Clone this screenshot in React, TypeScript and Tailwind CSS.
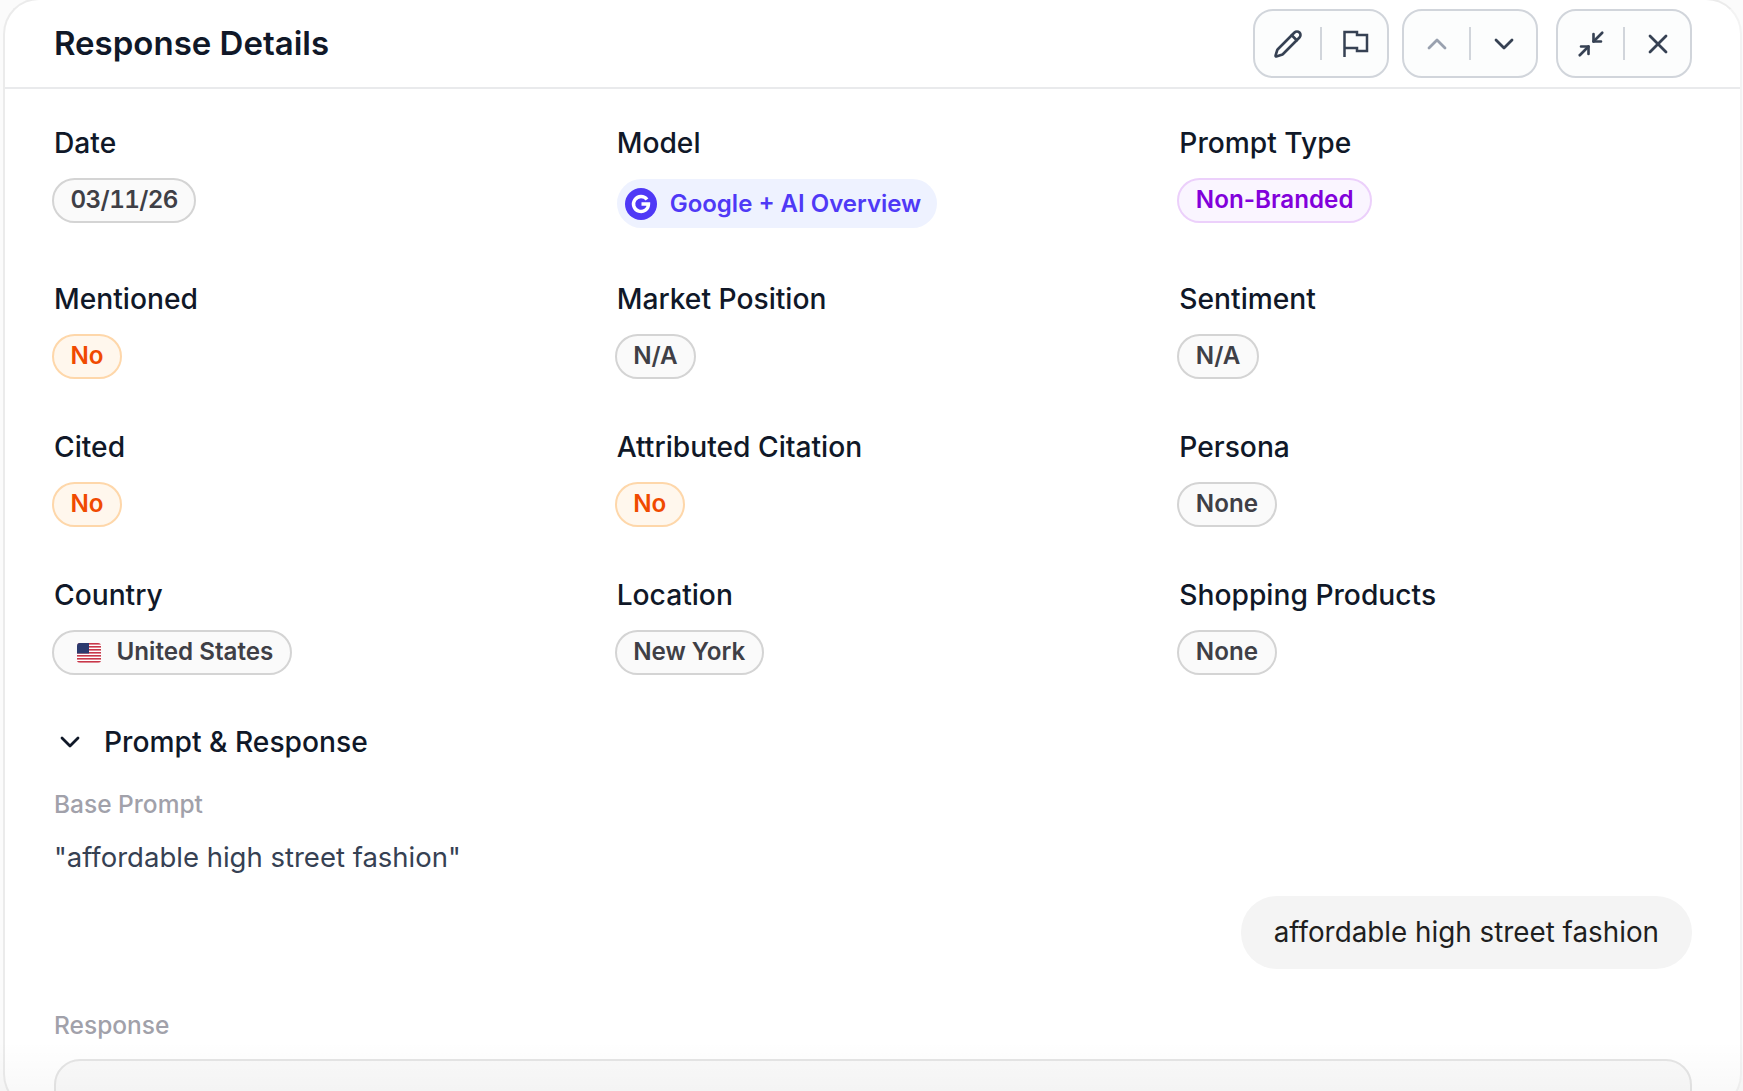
import React from 'react';
import { ChevronDown, ChevronUp, Minimize2, Pencil, X } from 'lucide-react';

const chipGray = 'border-[#d4d4d4] bg-[#fafafa] text-[#3f3f46]';
const chipOrange = 'border-[#fed7aa] bg-[#fff7ed] text-[#f04a00]';
const chipPurple = 'border-[#ecd0fb] bg-[#faf5ff] text-[#8200db]';

const Chip = ({ tone, children }: { tone: string; children: React.ReactNode }) => (
  <span className={`-ml-[2px] inline-flex h-[45px] items-center rounded-full border-2 px-[16.5px] text-[24.2px] font-semibold leading-none ${tone}`}>
    {children}
  </span>
);

const UsFlag = () => (
  <svg width="24" height="20" viewBox="0 0 24 20" className="shrink-0 rounded-[3px]">
    <rect width="24" height="20" fill="#fff" />
    {[0, 3, 6, 9, 12, 15, 18].map((y) => (
      <rect key={y} y={y} width="24" height="1.6" fill="#c8374a" />
    ))}
    <rect width="12" height="10.5" fill="#2b3a6e" />
  </svg>
);

const Flag = () => (
  <svg width="28" height="28" viewBox="0 0 28 28" fill="none" stroke="currentColor" strokeWidth="2.5">
    <path d="M3.5 27V2H16V5H26V21H16V18H3.5" />
  </svg>
);

const Field = ({ label, children }: { label: string; children: React.ReactNode }) => (
  <div>
    <div className="h-[36px] text-[28.2px] font-medium leading-[36px] text-[#101828]">{label}</div>
    <div className="mt-[17px]">{children}</div>
  </div>
);

const IconGroup = ({ left, right }: { left: React.ReactNode; right: React.ReactNode }) => (
  <div className="flex h-[69px] w-[136px] items-center rounded-[20px] border-2 border-[#d1d5db] bg-[#fcfdfd] text-[#364153]">
    <button className="flex flex-1 items-center justify-center">{left}</button>
    <div className="h-[33px] w-[2px] bg-[#d1d5db]" />
    <button className="flex flex-1 items-center justify-center">{right}</button>
  </div>
);

export default function App() {
  return (
    <div className="relative h-[1091px] overflow-hidden bg-[#fbfbfb] font-['Inter',sans-serif]">
      <div className="ml-[3px] mr-[1px] -mt-[2px] h-[1112px] rounded-[36px] border-2 border-[#ebebeb] border-r-[#f3f3f3] bg-white">
        <header className="flex h-[89px] items-center justify-between border-b-2 border-[#e9eaec] pl-[49px] pr-[48px]">
          <h1 className="text-[33px] font-semibold text-[#101828]">Response Details</h1>
          <div className="flex items-center gap-[13px]">
            <IconGroup left={<Pencil size={30} strokeWidth={2.1} />} right={<Flag />} />
            <IconGroup
              left={<ChevronUp size={32} strokeWidth={2.1} className="text-[#99a1af]" />}
              right={<ChevronDown size={32} strokeWidth={2.1} />}
            />
            <div className="ml-[5px]">
              <IconGroup left={<Minimize2 size={30} strokeWidth={2.1} />} right={<X size={32} strokeWidth={2.1} />} />
            </div>
          </div>
        </header>

        <main className="pl-[49px] pr-[48px] pt-[36px]">
          <div className="grid grid-cols-3 gap-x-[50px] gap-y-[50px]">
            <Field label="Date"><div className="tabular-nums tracking-[-0.6px]"><Chip tone={chipGray}>03/11/26</Chip></div></Field>
            <Field label="Model">
              <span className="mb-[3px] mt-[1px] inline-flex h-[49px] items-center gap-[13px] rounded-full bg-[#eef2ff] pl-[8px] pr-[16px] text-[24px] font-semibold leading-none text-[#4f39f6]">
                <svg width="32" height="32" viewBox="0 0 32 32" className="shrink-0">
                  <circle cx="16" cy="16" r="16" fill="#4f39f6" />
                  <path d="M22 11.5A7.5 7.5 0 1 0 23.5 16H16.5" fill="none" stroke="#fff" strokeWidth="3.4" />
                </svg>
                Google + AI Overview
              </span>
            </Field>
            <Field label="Prompt Type"><Chip tone={chipPurple}>Non-Branded</Chip></Field>

            <Field label="Mentioned"><Chip tone={chipOrange}>No</Chip></Field>
            <Field label="Market Position"><Chip tone={chipGray}>N/A</Chip></Field>
            <Field label="Sentiment"><Chip tone={chipGray}>N/A</Chip></Field>

            <Field label="Cited"><Chip tone={chipOrange}>No</Chip></Field>
            <Field label="Attributed Citation"><Chip tone={chipOrange}>No</Chip></Field>
            <Field label="Persona"><Chip tone={chipGray}>None</Chip></Field>

            <Field label="Country">
              <Chip tone={chipGray}>
                <span className="mr-[16px] ml-[6px]"><UsFlag /></span>
                United States
              </Chip>
            </Field>
            <Field label="Location"><Chip tone={chipGray}>New York</Chip></Field>
            <Field label="Shopping Products"><Chip tone={chipGray}>None</Chip></Field>
          </div>

          <div className="mt-[49px] flex h-[36px] items-center gap-[18px] text-[#101828]">
            <ChevronDown size={32} strokeWidth={2.1} />
            <span className="text-[28.2px] font-medium leading-[36px]">Prompt &amp; Response</span>
          </div>

          <div className="mt-[28px] text-[24.5px] font-medium leading-[32px] text-[#a1a1aa]">Base Prompt</div>
          <p className="mt-[21px] text-[27.5px] leading-[32px] text-[#364153]">"affordable high street fashion"</p>

          <div className="mt-[23px] flex justify-end">
            <div className="rounded-[36px] bg-[#f4f4f4] px-[33px] py-[20px] text-[27.8px] leading-[33px] text-[#1f1f1f]">
              affordable high street fashion
            </div>
          </div>

          <div className="mt-[40px] text-[24.5px] font-medium leading-[32px] text-[#a1a1aa]">Response</div>
          <div className="mt-[18px] h-[60px] rounded-[26px] border-2 border-[#e5e5e5] bg-[#fafafa]" />
        </main>
      </div>
      <div className="pointer-events-none absolute inset-x-0 bottom-0 h-[50px] bg-gradient-to-b from-transparent to-black/[0.025]" />
    </div>
  );
}
